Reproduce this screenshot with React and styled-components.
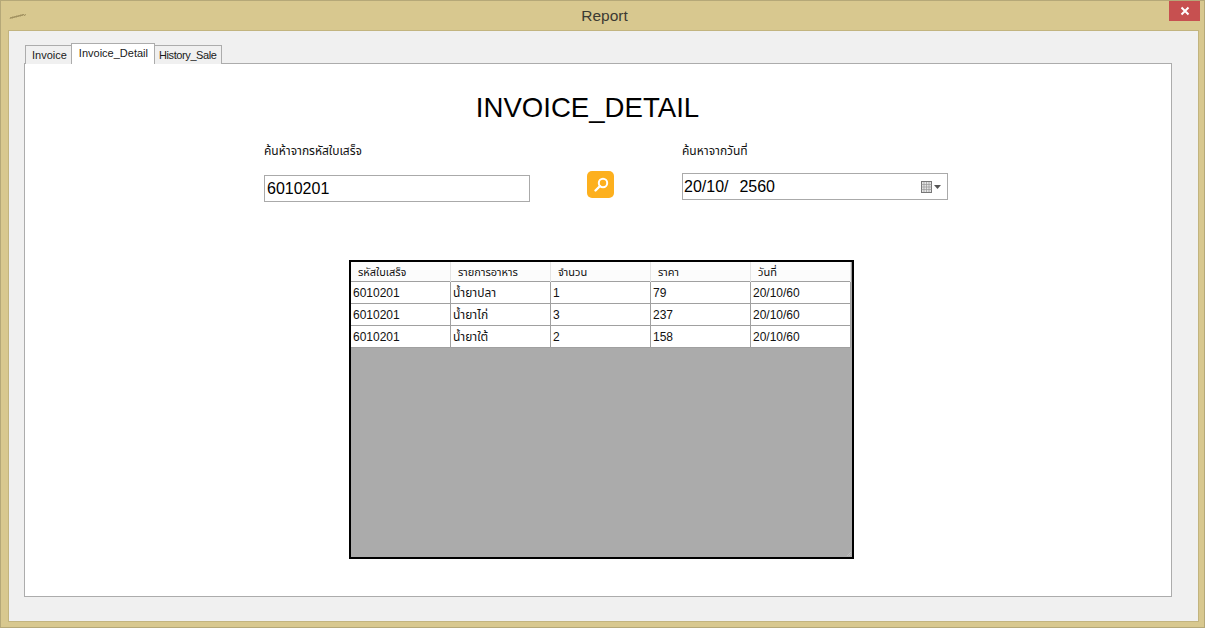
import React from 'react';
import styled, { createGlobalStyle } from 'styled-components';

const GlobalStyle = createGlobalStyle`
	html, body {
		margin: 0;
		padding: 0;
		background: #d8c88f;
	}
	body {
		font-family: 'Liberation Sans', 'Noto Sans', sans-serif;
	}
`;

const thaiFont = `'Liberation Sans', 'Noto Sans Thai', 'Noto Sans', 'DejaVu Sans', sans-serif`;

const Window = styled.div`
	width: 1205px;
	height: 628px;
	box-sizing: border-box;
	display: flex;
	flex-direction: column;
	background: #d8c88f;
	border: 1px solid #b5a878;
	overflow: hidden;
`;
const TitleBar = styled.div`
	height: 29px;
	flex: none;
	display: grid;
	grid-template-columns: 1fr auto 1fr;
	align-items: start;
	padding: 0 4px 0 8px;
`;
const AppIcon = styled.svg`
	width: 18px;
	height: 8px;
	margin-top: 11px;
`;
const WindowTitle = styled.div`
	font-size: 15.5px;
	color: #3c3a33;
	line-height: 29px;
`;
const CloseButton = styled.div`
	justify-self: end;
	width: 31px;
	height: 20px;
	background: #c75050;
	display: flex;
	align-items: center;
	justify-content: center;
`;
const Client = styled.div`
	flex: 1;
	margin: 0 5px 5px 7px;
	background: #f0f0f0;
	border: 1px solid #c2b47f;
	padding: 13px 26px 24px 15px;
	display: flex;
	flex-direction: column;
`;
const TabStrip = styled.div`
	display: flex;
	align-items: flex-end;
	height: 20px;
	padding-left: 2px;
	margin-bottom: -1px;
	position: relative;
	z-index: 1;
`;
const Tab = styled.div`
	box-sizing: border-box;
	height: ${(p) => (p.$active ? '21px' : '19px')};
	padding: 2px ${(p) => p.$right}px 0 ${(p) => p.$left}px;
	font-size: 11px;
	letter-spacing: ${(p) => p.$spacing || 0}px;
	line-height: 15px;
	color: #1a1a1a;
	background: ${(p) => (p.$active ? '#fff' : '#f0f0f0')};
	border: 1px solid #acacac;
	border-bottom: none;
	margin-left: -1px;
	position: relative;
	z-index: ${(p) => (p.$active ? 2 : 1)};
`;
const Panel = styled.div`
	flex: 1;
	background: #fff;
	border: 1px solid #acacac;
	display: flex;
	flex-direction: column;
	align-items: center;
`;
const PageTitle = styled.h1`
	margin: 27px 0 0 -21px;
	font-size: 27.6px;
	line-height: 34px;
	font-weight: 400;
	color: #000;
`;
const SearchRow = styled.div`
	align-self: flex-start;
	margin: 19px 0 0 239px;
	display: flex;
	align-items: flex-start;
`;
const Field = styled.div`
	width: ${(p) => p.$width}px;
	display: flex;
	flex-direction: column;
`;
const FieldLabel = styled.label`
	font-family: ${thaiFont};
	font-size: 12px;
	line-height: 14px;
	color: #111;
	height: 16px;
`;
const TextInput = styled.div`
	box-sizing: border-box;
	height: 27px;
	margin-top: ${(p) => p.$top}px;
	border: 1px solid #aaa;
	background: #fff;
	font-size: 16px;
	word-spacing: 1px;
	line-height: 25px;
	padding-left: ${(p) => p.$pad}px;
	color: #000;
	display: flex;
	align-items: center;
	justify-content: space-between;
`;
const SearchButton = styled.div`
	width: 27px;
	height: 27px;
	margin: 27px 68px 0 57px;
	border-radius: 5px;
	background: #fdb01e;
	display: flex;
	align-items: center;
	justify-content: center;
`;
const CalendarIcon = styled.svg`
	width: 26px;
	height: 14px;
	margin-right: 1px;
`;
const TableWrap = styled.div`
	box-sizing: border-box;
	width: 505px;
	height: 299px;
	margin: 58px 0 0 324px;
	border: 2px solid #000;
	background: #ababab;
	align-self: flex-start;
	position: relative;
`;
const HeaderRow = styled.div`
	display: grid;
	grid-template-columns: repeat(5, 100px) 1px;
	height: 19px;
	background: #fcfcfc;
	border-bottom: 1px solid #a0a0a0;
	border-right: 1px solid #a0a0a0;
`;
const HeaderCell = styled.div`
	font-family: ${thaiFont};
	font-size: 11px;
	line-height: 21px;
	color: #111;
	padding-left: 7px;
	border-right: 1px solid #e3e3e3;
`;
const Row = styled.div`
	display: grid;
	grid-template-columns: repeat(5, 100px);
	width: 500px;
	height: 22px;
	background: #fff;
	box-sizing: border-box;
	border-bottom: 1px solid #a0a0a0;
`;
const Cell = styled.div`
	font-family: ${thaiFont};
	font-size: 12px;
	line-height: 22px;
	color: #111;
	padding-left: 2px;
	border-right: 1px solid #a0a0a0;
`;
const ResizeGrip = styled.svg`
	position: absolute;
	right: 0;
	bottom: 0;
	width: 6px;
	height: 6px;
`;

const headers = ['รหัสใบเสร็จ', 'รายการอาหาร', 'จำนวน', 'ราคา', 'วันที่'];
const rows = [
	['6010201', 'น้ำยาปลา', '1', '79', '20/10/60'],
	['6010201', 'น้ำยาไก่', '3', '237', '20/10/60'],
	['6010201', 'น้ำยาใต้', '2', '158', '20/10/60'],
];

const App = () => {
	return (
		<>
			<GlobalStyle />
			<Window>
				<TitleBar>
					<AppIcon viewBox="0 0 18 8">
						<path d="M1 7 L2 5 L3 6.5 L4 4.5 L5 6 L6 4 L7 5.5 L8 3.5 L9 5 L10 3 L11 4.5 L12 2.5 L13 4 L14 2 L15 3.5 L17 2.5" stroke="#8a7a4a" strokeWidth="0.7" fill="none" />
					</AppIcon>
					<WindowTitle>Report</WindowTitle>
					<CloseButton>
						<svg width="10" height="10" viewBox="0 0 10 10">
							<path d="M1.5 1.5 L8.5 8.5 M8.5 1.5 L1.5 8.5" stroke="#fff" strokeWidth="2" />
						</svg>
					</CloseButton>
				</TitleBar>
				<Client>
					<TabStrip>
						<Tab $left={6} $right={4}>Invoice</Tab>
						<Tab $active $left={7} $right={6}>Invoice_Detail</Tab>
						<Tab $left={4} $right={4} $spacing={-0.4}>History_Sale</Tab>
					</TabStrip>
					<Panel>
						<PageTitle>INVOICE_DETAIL</PageTitle>
						<SearchRow>
							<Field $width={266}>
								<FieldLabel>ค้นห้าจากรหัสใบเสร็จ</FieldLabel>
								<TextInput $top={15} $pad={2}>6010201</TextInput>
							</Field>
							<SearchButton>
								<svg width="18" height="18" viewBox="0 0 18 18">
									<circle cx="11" cy="7" r="4.2" stroke="#fff" strokeWidth="2" fill="none" />
									<path d="M8 10 L3.5 14.5" stroke="#fff" strokeWidth="2.4" strokeLinecap="round" />
								</svg>
							</SearchButton>
							<Field $width={266}>
								<FieldLabel>ค้นหาจากวันที่</FieldLabel>
								<TextInput $top={13} $pad={1}>
									20/10/&nbsp; 2560
									<CalendarIcon viewBox="0 0 26 14">
										<rect x="1.5" y="1.5" width="10" height="11" fill="#e4e4e4" stroke="#777" />
										<path d="M1.5 4.5 H11.5 M1.5 7 H11.5 M1.5 9.5 H11.5 M4 2 V12 M6.5 2 V12 M9 2 V12" stroke="#999" strokeWidth="0.7" />
										<path d="M14 5 H21 L17.5 9 Z" fill="#555" />
									</CalendarIcon>
								</TextInput>
							</Field>
						</SearchRow>
						<TableWrap>
							<HeaderRow>
								{headers.map((label) => (
									<HeaderCell key={label}>{label}</HeaderCell>
								))}
							</HeaderRow>
							{rows.map((row) => (
								<Row key={row[1]}>
									{row.map((value, i) => (
										<Cell key={i}>{value}</Cell>
									))}
								</Row>
							))}
							<ResizeGrip viewBox="0 0 6 6">
								<path d="M1 5 L5 1 M3 5 L5 3" stroke="#bdbdbd" strokeWidth="1" />
							</ResizeGrip>
						</TableWrap>
					</Panel>
				</Client>
			</Window>
		</>
	);
};

export default App;
